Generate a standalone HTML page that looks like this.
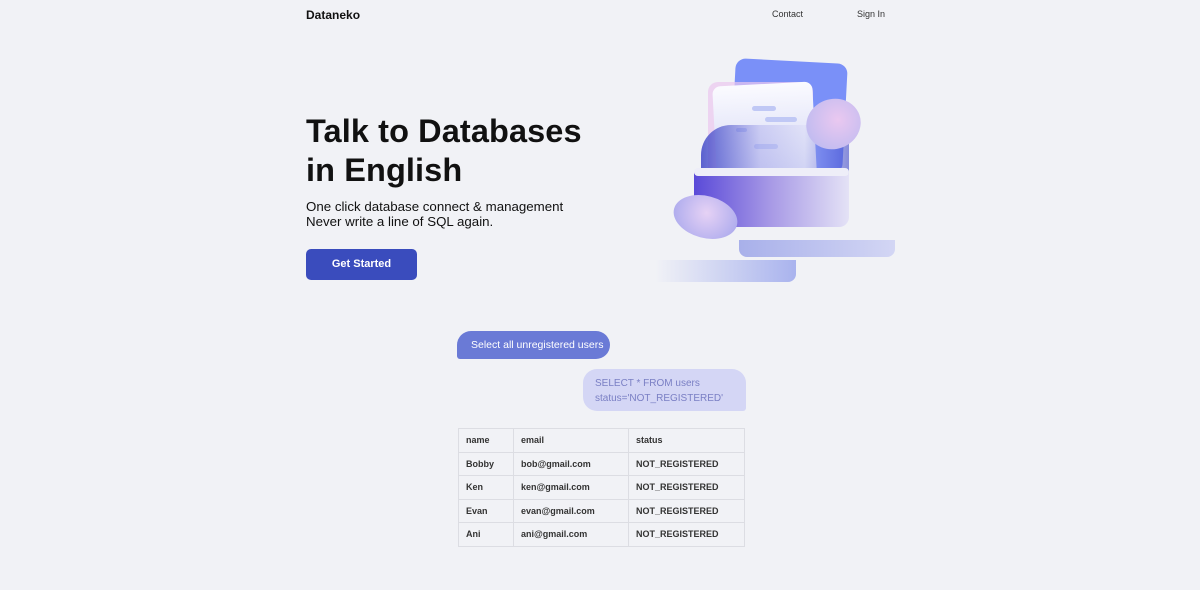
<!DOCTYPE html>
<html><head><style>
*{margin:0;padding:0;box-sizing:border-box}
body{width:1200px;height:590px;background:#f1f2f6;font-family:"Liberation Sans",sans-serif;position:relative;overflow:hidden;color:#111}
.a{position:absolute}
table{border-collapse:collapse;font-size:9px;font-weight:bold;color:#333}
td{border:1px solid #dcdde3;height:23.5px;padding-left:7px}
</style></head><body>
<div class="a" style="left:306px;top:8px;font-size:12px;font-weight:bold">Dataneko</div>
<div class="a" style="left:772px;top:9px;font-size:9px;color:#333">Contact</div>
<div class="a" style="left:857px;top:9px;font-size:9px;color:#333">Sign In</div>
<div class="a" style="left:306px;top:112px;font-size:32.5px;font-weight:bold;line-height:39px;letter-spacing:0.1px">Talk to Databases<br>in English</div>
<div class="a" style="left:306px;top:199px;font-size:13.3px;line-height:15px;color:#111">One click database connect &amp; management<br>Never write a line of SQL again.</div>
<div class="a" style="left:306px;top:249px;width:111px;height:31px;background:#3a4cbd;border-radius:5px;color:#fff;font-size:11px;font-weight:bold;text-align:center;line-height:31px">Get Started</div>
<!-- illustration -->
<div class="a" style="left:655px;top:260px;width:141px;height:22px;border-radius:0 0 8px 0;background:linear-gradient(90deg,rgba(170,180,240,0),#a9b3ee)"></div>
<div class="a" style="left:739px;top:240px;width:156px;height:17px;border-radius:0 0 8px 8px;background:linear-gradient(90deg,#a8b0ea,#d3d6f4)"></div>
<div class="a" style="left:733px;top:61px;width:112px;height:110px;border-radius:10px;background:#7a90f8;transform:rotate(3deg)"></div>
<div class="a" style="left:708px;top:82px;width:105px;height:110px;border-radius:10px;background:rgba(235,200,240,.7)"></div>
<div class="a" style="left:715px;top:84px;width:100px;height:110px;border-radius:8px;background:linear-gradient(#fbfbff,#c9cdf2);transform:rotate(-3deg)"></div>
<div class="a" style="left:752px;top:106px;width:24px;height:5px;border-radius:3px;background:#c0c8f5"></div>
<div class="a" style="left:765px;top:117px;width:32px;height:5px;border-radius:3px;background:#c0c8f5"></div>
<div class="a" style="left:736px;top:128px;width:11px;height:4px;border-radius:3px;background:#c0c8f5"></div>
<div class="a" style="left:754px;top:144px;width:24px;height:5px;border-radius:3px;background:#c0c8f5"></div>
<div class="a" style="left:701px;top:125px;width:148px;height:50px;border-radius:30px 10px 0 0;background:linear-gradient(90deg,rgba(64,72,200,.85),rgba(150,150,230,.35) 40%,rgba(200,200,240,.2) 70%,rgba(64,72,200,.6))"></div>
<div class="a" style="left:694px;top:170px;width:155px;height:57px;border-radius:4px 4px 10px 10px;background:linear-gradient(90deg,#5a4ad8,#a89ae6 50%,#e4e2f6)"></div>
<div class="a" style="left:694px;top:168px;width:155px;height:8px;background:#eeeef8;border-radius:4px"></div>
<div class="a" style="left:806px;top:99px;width:55px;height:50px;border-radius:50%;background:radial-gradient(circle at 60% 45%,#eac8f0,#b6b8f0);transform:rotate(-20deg)"></div>
<div class="a" style="left:673px;top:196px;width:65px;height:42px;border-radius:50%;background:radial-gradient(circle at 50% 40%,#e6d2f5,#a3a4ec);transform:rotate(15deg)"></div>
<!-- chat -->
<div class="a" style="left:457px;top:331px;width:153px;height:28px;background:#6a7ad6;border-radius:14px 14px 14px 3px;color:#fff;font-size:10.5px;line-height:28px;padding-left:14px">Select all unregistered users</div>
<div class="a" style="left:583px;top:369px;width:163px;height:42px;background:#d4d6f5;border-radius:14px 14px 3px 14px;color:#7a7fc4;font-size:10px;line-height:15px;padding:7px 12px">SELECT * FROM users<br>status='NOT_REGISTERED'</div>
<table class="a" style="left:458px;top:428px;width:287px">
<tr><td style="width:55px">name</td><td style="width:115px">email</td><td>status</td></tr>
<tr><td>Bobby</td><td>bob@gmail.com</td><td>NOT_REGISTERED</td></tr>
<tr><td>Ken</td><td>ken@gmail.com</td><td>NOT_REGISTERED</td></tr>
<tr><td>Evan</td><td>evan@gmail.com</td><td>NOT_REGISTERED</td></tr>
<tr><td>Ani</td><td>ani@gmail.com</td><td>NOT_REGISTERED</td></tr>
</table>
</body></html>
